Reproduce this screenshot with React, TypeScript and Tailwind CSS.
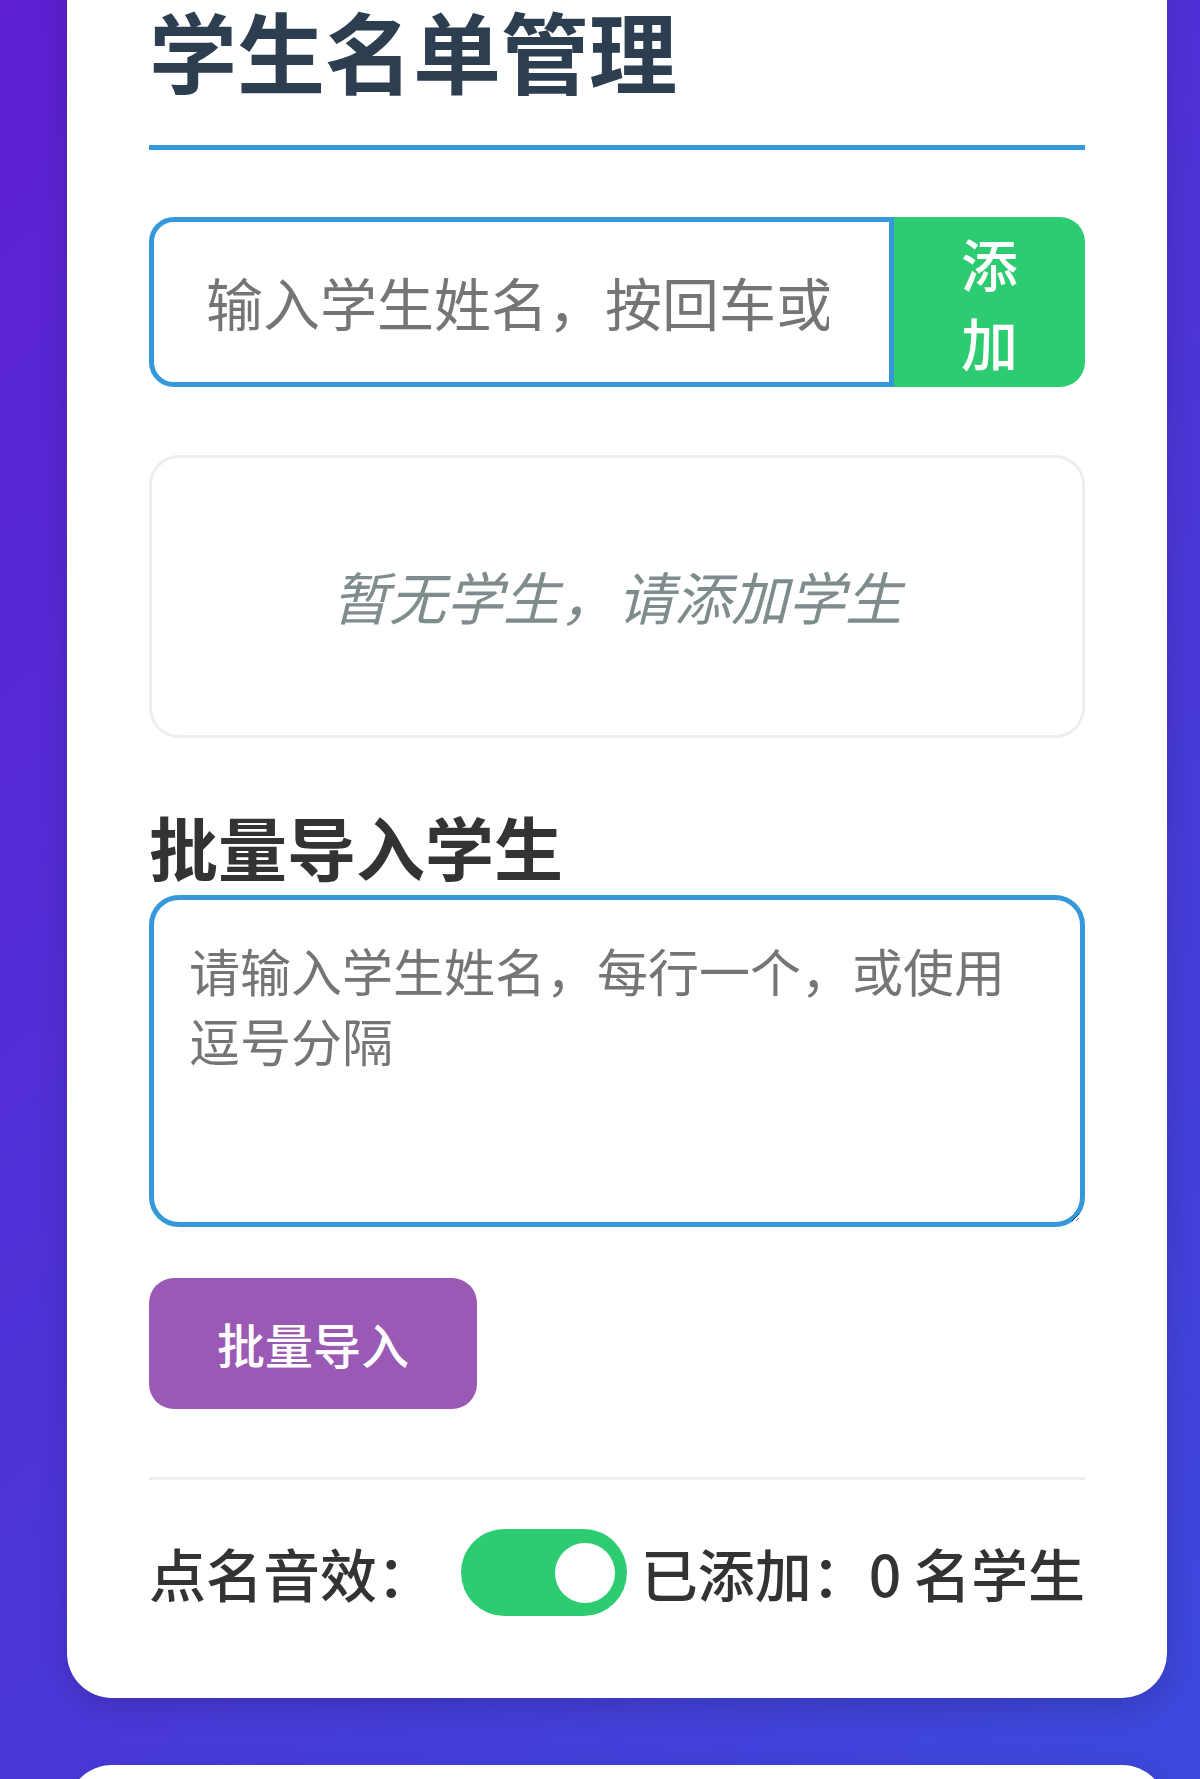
import { useState } from 'react';

export default function App() {
  const [soundOn, setSoundOn] = useState(true);
  const [name, setName] = useState('');
  const [bulk, setBulk] = useState('');
  const students: string[] = [];

  return (
    <div className="h-[1779px] overflow-hidden bg-[linear-gradient(135deg,#5e1fd2,#3c49dc)] font-['Noto_Sans_CJK_SC','Noto_Sans',sans-serif]">
      {/* Student list card */}
      <div className="-mt-[86px] ml-[67px] w-[1100px] rounded-[45px] bg-white px-[82px] pt-[82px] pb-[82px] shadow-[0_10px_30px_rgba(0,0,0,0.15)]">
        <h1 className="border-b-[5px] border-[#3498db] pb-[43px] text-[88px] leading-[1.2] font-bold text-[#2c3e50]">
          学生名单管理
        </h1>

        <div className="mt-[67px] flex h-[170px]">
          <input
            value={name}
            onChange={(e) => setName(e.target.value)}
            placeholder="输入学生姓名，按回车或点击添加"
            className="min-w-0 flex-1 rounded-l-[25px] border-[5px] border-[#3498db] bg-white pr-[60px] pl-[52px] text-[57px] text-[#333] outline-none placeholder:text-[#757575]"
          />
          <button className="w-[191px] rounded-r-[25px] bg-[#2ecc71] px-[45px] text-[57px] leading-[79px] font-medium text-white">
            添加
          </button>
        </div>

        <div className="mt-[68px] flex h-[283px] items-center justify-center rounded-[30px] border-[3px] border-[#eeeeee]">
          {students.length === 0 && (
            <p className="text-[57px] text-[#7f8c8d] italic">暂无学生，请添加学生</p>
          )}
        </div>

        <h2 className="mt-[67px] mb-[8px] text-[69px] leading-[1.2] font-bold text-[#333]">批量导入学生</h2>
        <textarea
          value={bulk}
          onChange={(e) => setBulk(e.target.value)}
          placeholder="请输入学生姓名，每行一个，或使用逗号分隔"
          className="block h-[332px] w-full rounded-[30px] border-[5px] border-[#3498db] p-[35px] text-[51px] leading-[70px] text-[#333] outline-none placeholder:text-[#757575]"
        />

        <button className="mt-[51px] rounded-[25px] bg-[#9b59b6] px-[68px] py-[32px] text-[48px] leading-[67px] font-medium text-white">
          批量导入
        </button>

        <div className="mt-[68px] flex items-center justify-between border-t-[3px] border-[#eeeeee] pt-[49px]">
          <div className="flex items-center gap-[27px]">
            <span className="text-[57px] font-medium text-[#333]">点名音效：</span>
            <button
              onClick={() => setSoundOn(!soundOn)}
              className={`flex h-[87px] w-[166px] items-center rounded-full px-[12px] ${soundOn ? 'justify-end bg-[#2ecc71]' : 'justify-start bg-[#cccccc]'}`}
            >
              <span className="block h-[60px] w-[60px] rounded-full bg-white" />
            </button>
          </div>
          <span className="text-[57px] font-medium text-[#333]">已添加：{students.length} 名学生</span>
        </div>
      </div>

      {/* Next card */}
      <div className="mt-[67px] ml-[67px] h-[400px] w-[1100px] rounded-[45px] bg-white shadow-[0_10px_30px_rgba(0,0,0,0.15)]" />
    </div>
  );
}
